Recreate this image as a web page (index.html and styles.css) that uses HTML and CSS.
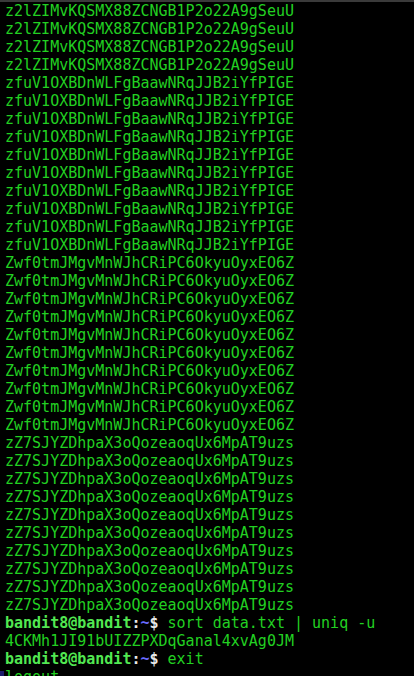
FILE: index.html
```html
<!DOCTYPE html>
<html lang="en">
<head>
    <meta charset="UTF-8">
    <meta name="viewport" content="width=device-width, initial-scale=1.0">
    <title>bandit8@bandit: ~</title>
    <link rel="stylesheet" href="styles.css">
</head>
<body>
    <div class="titlebar"></div>
    <div class="terminal">
        <div class="line">z2lZIMvKQSMX88ZCNGB1P2o22A9gSeuU</div>
        <div class="line">z2lZIMvKQSMX88ZCNGB1P2o22A9gSeuU</div>
        <div class="line">z2lZIMvKQSMX88ZCNGB1P2o22A9gSeuU</div>
        <div class="line">z2lZIMvKQSMX88ZCNGB1P2o22A9gSeuU</div>
        <div class="line">zfuV1OXBDnWLFgBaawNRqJJB2iYfPIGE</div>
        <div class="line">zfuV1OXBDnWLFgBaawNRqJJB2iYfPIGE</div>
        <div class="line">zfuV1OXBDnWLFgBaawNRqJJB2iYfPIGE</div>
        <div class="line">zfuV1OXBDnWLFgBaawNRqJJB2iYfPIGE</div>
        <div class="line">zfuV1OXBDnWLFgBaawNRqJJB2iYfPIGE</div>
        <div class="line">zfuV1OXBDnWLFgBaawNRqJJB2iYfPIGE</div>
        <div class="line">zfuV1OXBDnWLFgBaawNRqJJB2iYfPIGE</div>
        <div class="line">zfuV1OXBDnWLFgBaawNRqJJB2iYfPIGE</div>
        <div class="line">zfuV1OXBDnWLFgBaawNRqJJB2iYfPIGE</div>
        <div class="line">zfuV1OXBDnWLFgBaawNRqJJB2iYfPIGE</div>
        <div class="line">Zwf0tmJMgvMnWJhCRiPC6OkyuOyxEO6Z</div>
        <div class="line">Zwf0tmJMgvMnWJhCRiPC6OkyuOyxEO6Z</div>
        <div class="line">Zwf0tmJMgvMnWJhCRiPC6OkyuOyxEO6Z</div>
        <div class="line">Zwf0tmJMgvMnWJhCRiPC6OkyuOyxEO6Z</div>
        <div class="line">Zwf0tmJMgvMnWJhCRiPC6OkyuOyxEO6Z</div>
        <div class="line">Zwf0tmJMgvMnWJhCRiPC6OkyuOyxEO6Z</div>
        <div class="line">Zwf0tmJMgvMnWJhCRiPC6OkyuOyxEO6Z</div>
        <div class="line">Zwf0tmJMgvMnWJhCRiPC6OkyuOyxEO6Z</div>
        <div class="line">Zwf0tmJMgvMnWJhCRiPC6OkyuOyxEO6Z</div>
        <div class="line">Zwf0tmJMgvMnWJhCRiPC6OkyuOyxEO6Z</div>
        <div class="line">zZ7SJYZDhpaX3oQozeaoqUx6MpAT9uzs</div>
        <div class="line">zZ7SJYZDhpaX3oQozeaoqUx6MpAT9uzs</div>
        <div class="line">zZ7SJYZDhpaX3oQozeaoqUx6MpAT9uzs</div>
        <div class="line">zZ7SJYZDhpaX3oQozeaoqUx6MpAT9uzs</div>
        <div class="line">zZ7SJYZDhpaX3oQozeaoqUx6MpAT9uzs</div>
        <div class="line">zZ7SJYZDhpaX3oQozeaoqUx6MpAT9uzs</div>
        <div class="line">zZ7SJYZDhpaX3oQozeaoqUx6MpAT9uzs</div>
        <div class="line">zZ7SJYZDhpaX3oQozeaoqUx6MpAT9uzs</div>
        <div class="line">zZ7SJYZDhpaX3oQozeaoqUx6MpAT9uzs</div>
        <div class="line">zZ7SJYZDhpaX3oQozeaoqUx6MpAT9uzs</div>
        <div class="line"><span class="user">bandit8@bandit</span><span class="sep">:</span><span class="path">~</span><span class="sep">$</span> sort data.txt | uniq -u</div>
        <div class="line">4CKMh1JI91bUIZZPXDqGanal4xvAg0JM</div>
        <div class="line"><span class="user">bandit8@bandit</span><span class="sep">:</span><span class="path">~</span><span class="sep">$</span> exit</div>
        <div class="line last">logout</div>
    </div>
</body>
</html>
```

FILE: styles.css
```css
body { margin: 0; padding: 0; background: #000; overflow: hidden; }
.titlebar { height: 2px; background: #3a3a3a; }
.terminal { padding: 0 0 0 5px; font-family: "DejaVu Sans Mono", monospace; font-size: 15px; color: #22d022; }
.line { height: 18px; line-height: 18px; white-space: pre; }
.last { position: relative; }
.last::before { content: ""; position: absolute; left: -5px; top: 3px; width: 4px; height: 18px; background: #1c1c6a; }
.user { font-weight: bold; color: #52e852; }
.sep { font-weight: bold; color: #e8e8e8; }
.path { font-weight: bold; color: #6a6aff; }
```
